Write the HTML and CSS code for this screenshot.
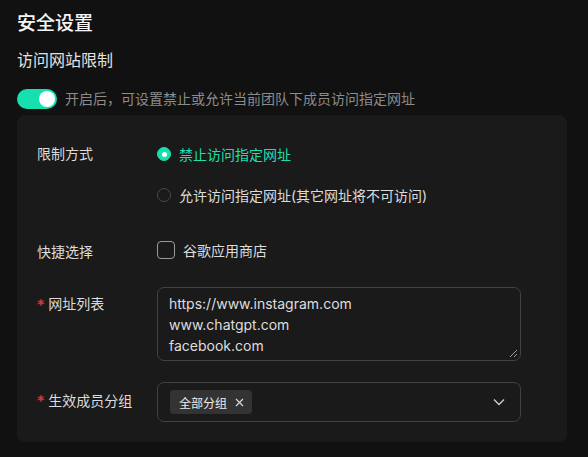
FILE: index.html
```html
<!DOCTYPE html>
<html lang="zh-CN">
<head>
<meta charset="utf-8">
<link rel="stylesheet" href="styles.css">
</head>
<body>
<div class="page">
  <h1 class="title">安全设置</h1>
  <h2 class="subtitle">访问网站限制</h2>
  <div class="switch-row">
    <span class="switch"><span class="knob"></span></span>
    <span class="hint">开启后，可设置禁止或允许当前团队下成员访问指定网址</span>
  </div>
  <div class="card">
    <div class="item item-radio">
      <div class="label">限制方式</div>
      <div class="control radios">
        <div class="radio checked"><span class="dot"></span><span class="radio-text">禁止访问指定网址</span></div>
        <div class="radio"><span class="dot"></span><span class="radio-text">允许访问指定网址(其它网址将不可访问)</span></div>
      </div>
    </div>
    <div class="item item-check">
      <div class="label">快捷选择</div>
      <div class="control">
        <div class="checkbox"><span class="box"></span><span class="check-text">谷歌应用商店</span></div>
      </div>
    </div>
    <div class="item item-urls">
      <div class="label"><span class="star">*</span>网址列表</div>
      <div class="control">
        <div class="textarea">
          <div class="line">https://www.instagram.com</div>
          <div class="line">www.chatgpt.com</div>
          <div class="line">facebook.com</div>
          <svg class="grip" width="9" height="9" viewBox="0 0 9 9"><path d="M8 1L1 8M8 5L5 8" stroke="#9a9a9a" stroke-width="1" fill="none"/></svg>
        </div>
      </div>
    </div>
    <div class="item item-group">
      <div class="label"><span class="star">*</span>生效成员分组</div>
      <div class="control">
        <div class="select">
          <span class="tag">全部分组<svg class="tag-x" width="9" height="9" viewBox="0 0 9 9"><path d="M1 1L8 8M8 1L1 8" stroke="#d8d8d8" stroke-width="1.2" fill="none"/></svg></span>
          <svg class="chev" width="12" height="8" viewBox="0 0 12 8"><path d="M1 1.5L6 6.5L11 1.5" stroke="#d0d0d0" stroke-width="1.3" fill="none"/></svg>
        </div>
      </div>
    </div>
  </div>
</div>
</body>
</html>
```
FILE: styles.css
```css
* { box-sizing: border-box; }
html, body { margin: 0; padding: 0; background: #111111; }
body {
  font-family: "Inter", "Noto Sans CJK SC", sans-serif;
  color: #e0e0e0;
  width: 588px;
  height: 457px;
  overflow: hidden;
}
.page { padding: 11px 0 0 17px; }
.title {
  margin: 0;
  font-size: 19px;
  line-height: 26px;
  font-weight: 500;
  color: #f5f5f5;
}
.subtitle {
  margin: 11px 0 0;
  font-size: 16px;
  line-height: 24px;
  font-weight: 400;
  color: #e2e2e2;
}
.switch-row {
  margin-top: 17px;
  display: flex;
  align-items: center;
  gap: 8px;
  height: 20px;
}
.switch {
  width: 40px;
  height: 20px;
  border-radius: 10px;
  background: #17e0b0;
  display: flex;
  justify-content: flex-end;
  align-items: center;
  padding-right: 2px;
}
.knob { width: 16px; height: 16px; border-radius: 50%; background: #ffffff; }
.hint { font-size: 14px; color: #8c8c8c; line-height: 20px; }
.card {
  margin-top: 6px;
  width: 550px;
  background: #1a1a1a;
  border-radius: 8px;
  padding: 23px 20px 20px;
}
.item { display: flex; align-items: flex-start; }
.item-check { margin-top: 23px; }
.item-urls { margin-top: 21px; }
.item-group { margin-top: 21px; }
.label {
  width: 120px;
  flex: none;
  font-size: 14px;
  line-height: 32px;
  color: #dcdcdc;
  display: flex;
  align-items: center;
}
.item-check .label { height: 32px; padding-top: 3px; line-height: 29px; }
.item-urls .label { line-height: 34px; }
.item-group .label { line-height: 37px; }
.star { color: #e8342c; margin-right: 4px; font-family: "DejaVu Sans", sans-serif; font-weight: bold; font-size: 14px; }
.control { width: 364px; }
.radios { display: flex; flex-direction: column; gap: 9px; }
.radio { display: flex; align-items: center; height: 32px; gap: 8px; font-size: 14px; color: #dcdcdc; }
.radio .dot {
  width: 14px; height: 14px; border-radius: 50%;
  border: 1px solid #4a4a4a;
  display: flex; align-items: center; justify-content: center;
}
.radio.checked .dot { background: #17e0b0; border-color: #17e0b0; }
.radio.checked .dot::after { content: ""; width: 5px; height: 5px; border-radius: 50%; background: #ffffff; }
.radio.checked .radio-text { color: #1ddfae; }
.checkbox { display: flex; align-items: center; height: 32px; gap: 8px; font-size: 14px; color: #dcdcdc; }
.box { width: 18px; height: 18px; border: 1.5px solid #9a9a9a; border-radius: 4px; }
.textarea {
  position: relative;
  height: 74px;
  border: 1px solid #414141;
  border-radius: 7px;
  padding: 5px 11px;
  font-size: 14px;
  line-height: 21px;
  color: #dedede;
}
.grip { position: absolute; right: 2px; bottom: 2px; }
.select {
  height: 40px;
  border: 1px solid #414141;
  border-radius: 7px;
  padding: 0 15px 0 12px;
  display: flex;
  align-items: center;
  justify-content: space-between;
}
.tag {
  height: 24px;
  background: #333333;
  border-radius: 4px;
  padding: 0 8px 0 9px;
  display: flex;
  align-items: center;
  gap: 8px;
  font-size: 12px;
  color: #ececec;
}
.chev { display: block; }
```
